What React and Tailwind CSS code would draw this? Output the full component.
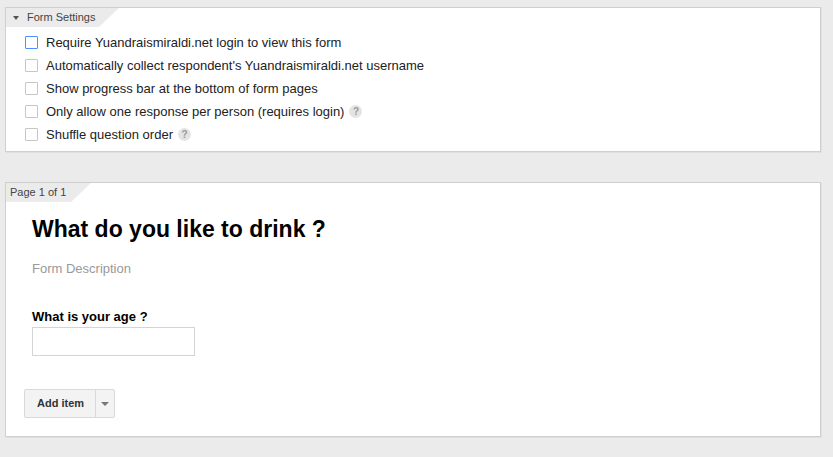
import { useState } from "react";

const settings = [
  { label: "Require Yuandraismiraldi.net login to view this form", focus: true },
  { label: "Automatically collect respondent's Yuandraismiraldi.net username" },
  { label: "Show progress bar at the bottom of form pages" },
  { label: "Only allow one response per person (requires login)", help: true },
  { label: "Shuffle question order", help: true },
];

function HelpIcon() {
  return (
    <span className="ml-[5px] inline-flex h-[13px] w-[13px] items-center justify-center rounded-full bg-[#e4e4e4] text-[10px] font-bold leading-none text-[#9a9a9a]">
      ?
    </span>
  );
}

function Tab({ children, width }) {
  return (
    <div
      className={`flex h-[19px] items-center bg-[#ebebeb] pl-[6px] text-[11px] text-[#444] [clip-path:polygon(0_0,100%_0,calc(100%-20px)_100%,0_100%)] ${width}`}
    >
      {children}
    </div>
  );
}

export default function App() {
  const [checked, setChecked] = useState({});
  const [age, setAge] = useState("");

  return (
    <div className="min-h-[457px] w-[833px] bg-[#ebebeb] pl-[5px] pt-[7px] font-['Liberation_Sans',Arial,sans-serif]">
      {/* Form settings panel */}
      <div className="w-[816px] border border-[#cfcfcf] bg-white shadow-[1px_1px_0_#e0e0e0]">
        <Tab width="w-[113px]">
          <span className="mr-[8px] ml-[1px] h-0 w-0 border-x-[3.5px] border-t-[4px] border-x-transparent border-t-[#555]" />
          Form Settings
        </Tab>
        <div className="pt-[4px] pb-[5px] pl-[19px]">
          {settings.map((s, i) => (
            <label key={i} className="flex h-[23px] items-center text-[13px] text-[#222]">
              <span
                onClick={() => setChecked({ ...checked, [i]: !checked[i] })}
                className={`mr-[8px] h-[13px] w-[13px] rounded-[1px] border bg-white ${
                  s.focus ? "border-[#4d90fe]" : "border-[#c6c6c6]"
                }`}
              />
              {s.label}
              {s.help && <HelpIcon />}
            </label>
          ))}
        </div>
      </div>

      {/* Page panel */}
      <div className="mt-[30px] w-[816px] border border-[#cfcfcf] bg-white pb-[18px] shadow-[1px_1px_0_#e0e0e0]">
        <Tab width="w-[85px]">
          <span className="ml-[-2px]">Page 1 of 1</span>
        </Tab>
        <div className="pl-[26px]">
          <h1 className="mt-[13px] text-[23px] font-bold leading-[28px] text-black">What do you like to drink ?</h1>
          <p className="mt-[18px] text-[13px] leading-[16px] text-[#999]">Form Description</p>
          <p className="mt-[32px] text-[13px] font-bold leading-[16px] text-black">What is your age ?</p>
          <input
            value={age}
            onChange={(e) => setAge(e.target.value)}
            className="mt-[2px] h-[29px] w-[163px] border border-[#d4d4d4] px-[6px] text-[13px] outline-none"
          />
        </div>
        <div className="mt-[33px] ml-[18px] flex h-[29px] w-[91px] rounded-[2px] border border-[#d9d9d9] bg-[#f3f3f3] text-[11px] font-bold text-[#333]">
          <button className="flex flex-1 items-center justify-center pl-[1px]">Add item</button>
          <span className="w-px bg-[#d9d9d9]" />
          <button className="flex w-[18px] items-center justify-center">
            <span className="h-0 w-0 border-x-[4px] border-t-[4px] border-x-transparent border-t-[#777]" />
          </button>
        </div>
      </div>
    </div>
  );
}
